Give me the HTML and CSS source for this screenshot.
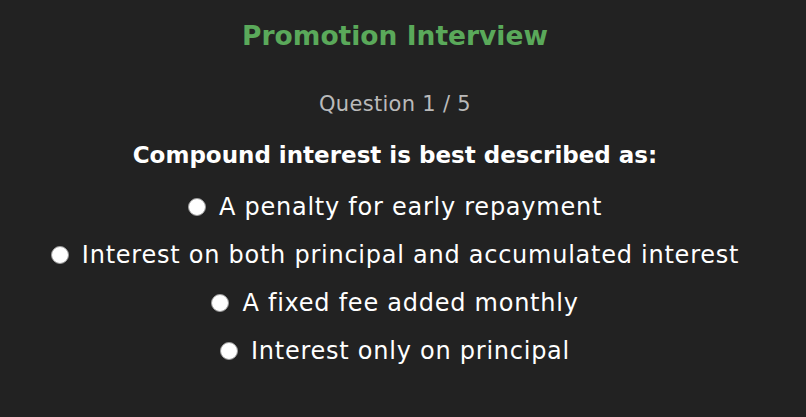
FILE: index.html
```html
<!DOCTYPE html>
<html lang="en">

<head>
    <meta charset="UTF-8">
    <meta name="viewport" content="width=device-width, initial-scale=1.0">
    <title>Promotion Interview</title>
    <link rel="stylesheet" href="styles.css">
</head>

<body>
    <!-- Interview Section -->
    <div class="quiz">
        <h1 class="quiz-title">Promotion Interview</h1>
        <p class="quiz-count">Question 1 / 5</p>
        <h2 class="quiz-question">Compound interest is best described as:</h2>
        <div class="options">
            <label class="option"><input type="radio" name="answer"> A penalty for early repayment</label>
            <label class="option"><input type="radio" name="answer"> Interest on both principal and accumulated interest</label>
            <label class="option"><input type="radio" name="answer"> A fixed fee added monthly</label>
            <label class="option"><input type="radio" name="answer"> Interest only on principal</label>
        </div>
    </div>
</body>

</html>
```

FILE: styles.css
```css
body {
    font-family: "DejaVu Sans", Arial, sans-serif;
    margin: 0;
    padding: 0;
    background: #222222;
    color: #fff;
}

.quiz {
    padding: 16px 16px 0 0;
    text-align: center;
}

.quiz-title {
    margin: 0;
    font-size: 26.5px;
    line-height: 40px;
    font-weight: 700;
    color: #5aa95a;
}

.quiz-count {
    margin: 34px 0 0;
    font-size: 21px;
    line-height: 28px;
    letter-spacing: 0.3px;
    color: #bababa;
}

.quiz-question {
    margin: 22px 0 0;
    font-size: 23px;
    line-height: 30px;
    font-weight: 700;
}

.options {
    margin-top: 13px;
    display: flex;
    flex-direction: column;
    align-items: center;
}

.option {
    height: 48px;
    display: flex;
    align-items: center;
    gap: 13px;
    font-size: 24px;
    letter-spacing: 0.75px;
    cursor: pointer;
}

.option input {
    appearance: none;
    margin: 0;
    width: 18px;
    height: 18px;
    border-radius: 50%;
    background: #fff;
    border: 1px solid #9a9a9a;
}
```
